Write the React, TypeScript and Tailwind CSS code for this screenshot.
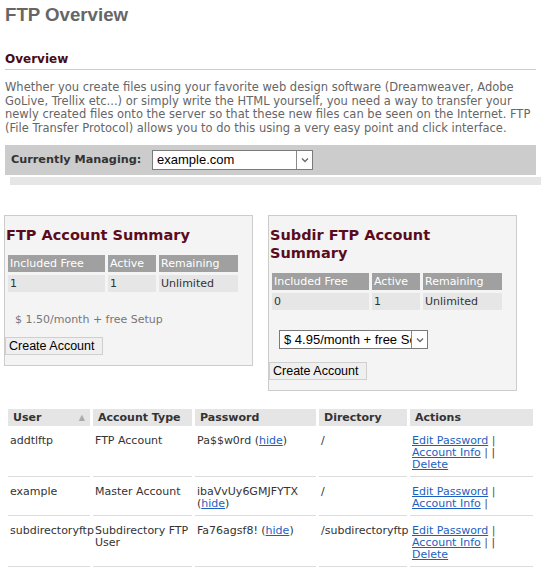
import React from "react";

const verdana = "font-['DejaVu_Sans',Verdana,sans-serif]";
const arial = "font-['Liberation_Sans',Arial,sans-serif]";

const Chevron = () => (
  <svg width="8" height="6" viewBox="0 0 8 6" className="block">
    <polyline points="1,1.5 4,4.5 7,1.5" fill="none" stroke="#6b6b6b" strokeWidth="1.4" />
  </svg>
);

interface DropdownProps {
  value: string;
  size: string;
}

const Dropdown: React.FC<DropdownProps> = ({ value, size }) => (
  <div className={`flex border border-[#7a7a7a] bg-white ${size}`}>
    <div className={`flex-1 overflow-hidden whitespace-nowrap pl-[4px] text-[13px] leading-[17px] text-black ${arial}`}>
      {value}
    </div>
    <div className="flex w-[16px] items-center justify-center border-l border-[#8a8a8a] bg-white">
      <Chevron />
    </div>
  </div>
);

const CreateButton = () => (
  <button
    className={`block h-[18px] w-[98px] border border-[#cfcfcf] bg-[#efefef] pl-[3px] text-left text-[12.5px] leading-[16px] text-black ${arial}`}
  >
    Create Account
  </button>
);

const SummaryTable = ({ included }: { included: string }) => (
  <table className="border-separate border-spacing-[3px] text-[11px]">
    <tbody>
      <tr className="h-[17px] bg-[#a0a0a0] text-white">
        <td className="w-[97px] px-[2px] leading-[17px]">Included Free</td>
        <td className="w-[48px] px-[2px] leading-[17px]">Active</td>
        <td className="w-[79px] px-[2px] leading-[17px]">Remaining</td>
      </tr>
      <tr className="h-[17px] bg-[#e6e6e6] text-[#333]">
        <td className="px-[2px] leading-[17px]">{included}</td>
        <td className="px-[2px] leading-[17px]">1</td>
        <td className="px-[2px] leading-[17px]">Unlimited</td>
      </tr>
    </tbody>
  </table>
);

const Hide = () => (
  <>
    (<a href="#" className="text-[#1d5fbf] underline">hide</a>)
  </>
);

const Link = ({ children }: { children: React.ReactNode }) => (
  <a href="#" className="text-[#1d5fbf] underline">{children}</a>
);

const cell = "border-b border-[#dcdcdc] px-[2px] pt-[7px] pb-[5px] align-top";

export default function App() {
  return (
    <div className={`min-h-[569px] w-[541px] overflow-hidden bg-white px-[5px] ${verdana}`}>
      <h1 className={`mt-[4px] text-[18.67px] font-bold leading-[21px] text-[#666666] ${arial}`}>FTP Overview</h1>

      <h2 className="mt-[27px] border-b border-[#cccccc] pb-[3px] text-[12px] font-bold leading-[14px] text-[#4a0a14]">
        Overview
      </h2>

      <p className="mt-[11px] whitespace-nowrap text-[11.5px] leading-[13.5px] text-[#666666]">
        Whether you create files using your favorite web design software (Dreamweaver, Adobe
        <br />
        GoLive, Trellix etc...) or simply write the HTML yourself, you need a way to transfer your
        <br />
        newly created files onto the server so that these new files can be seen on the Internet. FTP
        <br />
        (File Transfer Protocol) allows you to do this using a very easy point and click interface.
      </p>

      <div className="mt-[10px] flex h-[30px] items-center bg-[#cccccc] pl-[6px]">
        <span className="w-[141px] text-[11.25px] font-bold text-[#333333]">Currently Managing:</span>
        <Dropdown value="example.com" size="h-[20px] w-[161px]" />
      </div>
      <div className="-mr-[5px] ml-[5px] mt-[2px] h-[8px] bg-[#e6e6e6]" />

      <div className="-ml-[1px] mt-[30px] flex items-start gap-[15px]">
        <div className="w-[249px] border border-[#cccccc] bg-[#f4f4f4] pb-[10px]">
          <h3 className="pl-[1px] pt-[10px] text-[14.5px] font-bold leading-[18px] text-[#5a0c1c]">FTP Account Summary</h3>
          <div className="mt-[8px]">
            <SummaryTable included="1" />
          </div>
          <div className="mt-[18px] pl-[10px] text-[11px] leading-[13px] text-[#777777]">$ 1.50/month + free Setup</div>
          <div className="mt-[11px]">
            <CreateButton />
          </div>
        </div>

        <div className="w-[249px] border border-[#cccccc] bg-[#f4f4f4] pb-[10px]">
          <h3 className="pl-[1px] pt-[10px] text-[14.5px] font-bold leading-[18px] text-[#5a0c1c]">
            Subdir FTP Account
            <br />
            Summary
          </h3>
          <div className="mt-[8px]">
            <SummaryTable included="0" />
          </div>
          <div className="ml-[10px] mt-[17px]">
            <Dropdown value="$ 4.95/month + free Setup" size="h-[19px] w-[149px]" />
          </div>
          <div className="mt-[13px]">
            <CreateButton />
          </div>
        </div>
      </div>

      <table className="mt-[16px] w-full table-fixed border-separate border-spacing-x-[3px] border-spacing-y-[2px] text-[11px] leading-[12px] text-[#333333]">
        <colgroup>
          <col className="w-[82px]" />
          <col className="w-[99px]" />
          <col className="w-[121px]" />
          <col className="w-[88px]" />
          <col className="w-[123px]" />
        </colgroup>
        <thead>
          <tr className="h-[17px] bg-[#e5e5e5] text-left font-bold">
            <th className="px-[5px]">
              <div className="flex items-center justify-between">
                <span>User</span>
                <span className="text-[8px] text-[#aaaaaa]">▲</span>
              </div>
            </th>
            <th className="px-[5px]">Account Type</th>
            <th className="px-[5px]">Password</th>
            <th className="px-[5px]">Directory</th>
            <th className="px-[5px]">Actions</th>
          </tr>
        </thead>
        <tbody>
          <tr>
            <td className={cell}>addtlftp</td>
            <td className={cell}>FTP Account</td>
            <td className={cell}>
              Pa$$w0rd <Hide />
            </td>
            <td className={cell}>/</td>
            <td className={cell}>
              <Link>Edit Password</Link> <span className="text-[#555]">|</span>
              <br />
              <Link>Account Info</Link> <span className="text-[#555]">|</span> <span className="text-[#8b2332]">|</span>
              <br />
              <Link>Delete</Link>
            </td>
          </tr>
          <tr>
            <td className={cell}>example</td>
            <td className={cell}>Master Account</td>
            <td className={cell}>
              ibaVvUy6GMJFYTX
              <br />
              <Hide />
            </td>
            <td className={cell}>/</td>
            <td className={cell}>
              <Link>Edit Password</Link> <span className="text-[#555]">|</span>
              <br />
              <Link>Account Info</Link> <span className="text-[#555]">|</span>
            </td>
          </tr>
          <tr>
            <td className={`${cell} whitespace-nowrap`}>subdirectoryftp</td>
            <td className={cell}>
              Subdirectory FTP
              <br />
              User
            </td>
            <td className={cell}>
              Fa76agsf8! <Hide />
            </td>
            <td className={`${cell} whitespace-nowrap`}>/subdirectoryftp</td>
            <td className={cell}>
              <Link>Edit Password</Link> <span className="text-[#555]">|</span>
              <br />
              <Link>Account Info</Link> <span className="text-[#555]">|</span> <span className="text-[#8b2332]">|</span>
              <br />
              <Link>Delete</Link>
            </td>
          </tr>
        </tbody>
      </table>
    </div>
  );
}
